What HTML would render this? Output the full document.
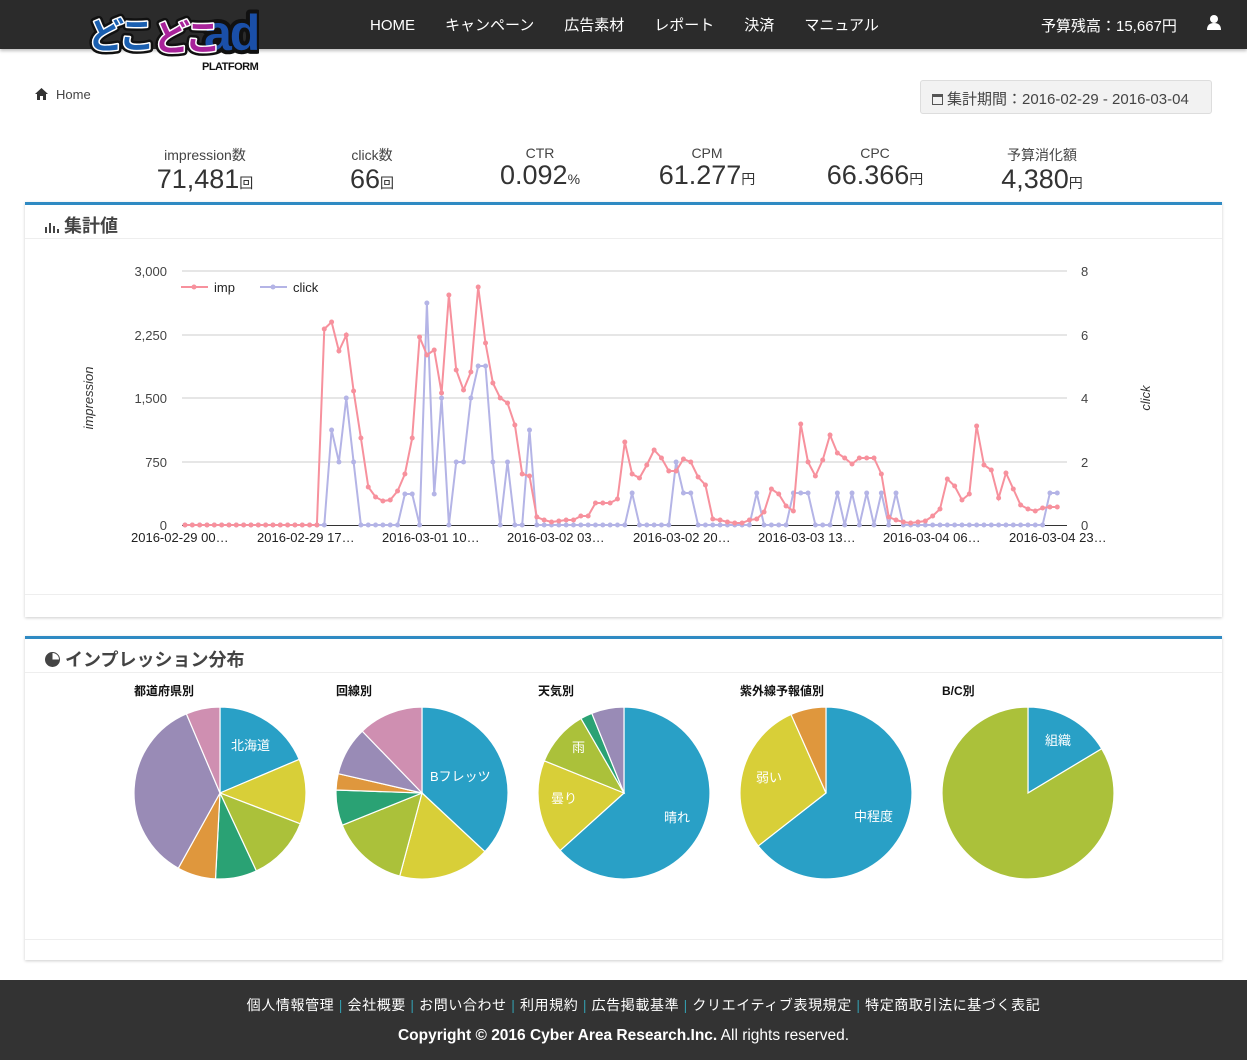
<!DOCTYPE html>
<html><head><meta charset="utf-8">
<style>
*{box-sizing:border-box;margin:0;padding:0}
body{width:1247px;height:1060px;background:#fff;font-family:"Liberation Sans","Noto Sans CJK JP",sans-serif;color:#333;position:relative;overflow:hidden}
.hdr{position:absolute;left:0;top:0;width:1247px;height:49px;background:#2b2b2b;box-shadow:0 2px 3px rgba(0,0,0,.25)}
.nav{position:absolute;top:14px;left:370px;color:#fff;font-size:15px;white-space:nowrap}
.nav span{margin-right:30px}
.bud{position:absolute;top:15px;left:1041px;color:#fff;font-size:15px}
.abs{position:absolute}
.stat{position:absolute;top:145px;width:160px;text-align:center}
.stat .l{font-size:14px;color:#444}
.stat .v{font-size:27px;color:#333;line-height:28px}
.stat .v small{font-size:14px}
.panel{position:absolute;left:25px;width:1197px;border-top:3px solid #2f8ac3;background:#fff;box-shadow:0 1px 3px rgba(0,0,0,.2)}
.ph{height:34px;border-bottom:1px solid #eee;font-size:18px;font-weight:bold;color:#444;padding:7px 0 0 20px}
.foot{position:absolute;left:0;top:980px;width:1247px;height:80px;background:#333;color:#fff;text-align:center}
</style></head><body>
<div class="hdr">
 <svg class="abs" style="left:84px;top:0" width="175" height="75" font-family="Noto Sans CJK JP, sans-serif" font-weight="bold">
  <g stroke="#111" stroke-width="8" stroke-linejoin="round" paint-order="stroke">
   <text x="4" y="48" font-size="36" fill="#1a5fb0" letter-spacing="-4" stroke="#111">どこ</text>
   <text x="70" y="50" font-size="36" fill="#a8239a" letter-spacing="-4">どこ</text>
   <text x="120" y="50" font-size="50" fill="#1a4fa8" font-family="Liberation Sans, sans-serif" letter-spacing="-2">ad</text>
  </g>
  <g stroke="#fff" stroke-width="3" paint-order="stroke" stroke-linejoin="round">
   <text x="4" y="48" font-size="36" fill="#1a5fb0" letter-spacing="-4">どこ</text>
   <text x="70" y="50" font-size="36" fill="#a8239a" letter-spacing="-4">どこ</text>
  </g>
  <text x="118" y="70" font-size="11" fill="#111" font-family="Liberation Sans, sans-serif" letter-spacing="-.5">PLATFORM</text>
 </svg>
 <div class="nav"><span>HOME</span><span>キャンペーン</span><span>広告素材</span><span>レポート</span><span>決済</span><span>マニュアル</span></div>
 <div class="bud">予算残高：15,667円</div>
 <svg class="abs" style="left:1206px;top:14px" width="16" height="16" viewBox="0 0 16 16"><circle cx="8" cy="5" r="4" fill="#fff"/><path d="M1 16 Q1 9 8 9 Q15 9 15 16Z" fill="#fff"/></svg>
</div>
<svg class="abs" style="left:35px;top:88px" width="13" height="12" viewBox="0 0 13 12"><path d="M6.5 0 L13 6 L11 6 L11 12 L8 12 L8 8 L5 8 L5 12 L2 12 L2 6 L0 6Z" fill="#333"/></svg>
<div class="abs" style="left:56px;top:87px;font-size:13px;color:#444">Home</div>
<div class="abs" style="left:920px;top:80px;width:292px;height:34px;background:#f2f2f2;border:1px solid #ddd;border-radius:3px;font-size:15px;color:#444;padding:7px 0 0 11px;white-space:nowrap"><span style="display:inline-block;width:11px;height:11px;border:1.5px solid #555;border-top-width:3px;margin-right:4px;vertical-align:-1px"></span>集計期間：2016-02-29 - 2016-03-04</div>

<div class="stat" style="left:125px"><div class="l">impression数</div><div class="v">71,481<small>回</small></div></div>
<div class="stat" style="left:292px"><div class="l">click数</div><div class="v">66<small>回</small></div></div>
<div class="stat" style="left:460px"><div class="l">CTR</div><div class="v">0.092<small>%</small></div></div>
<div class="stat" style="left:627px"><div class="l">CPM</div><div class="v">61.277<small>円</small></div></div>
<div class="stat" style="left:795px"><div class="l">CPC</div><div class="v">66.366<small>円</small></div></div>
<div class="stat" style="left:962px"><div class="l">予算消化額</div><div class="v">4,380<small>円</small></div></div>

<div class="panel" style="top:202px;height:415px">
 <div class="ph"><svg width="14" height="12" style="vertical-align:-1px"><rect x="0" y="6" width="2" height="6" fill="#444"/><rect x="4" y="2" width="2" height="10" fill="#444"/><rect x="8" y="5" width="2" height="7" fill="#444"/><rect x="12" y="8" width="2" height="4" fill="#444"/></svg> 集計値</div>
 <div style="position:absolute;left:0;bottom:22px;width:100%;border-top:1px solid #eee"></div>
</div>
<svg class="abs" style="left:0;top:255px" width="1247" height="300" font-family="Liberation Sans, sans-serif">
 <g stroke="#ccc" stroke-width="1">
  <line x1="182" y1="16" x2="1067" y2="16"/><line x1="182" y1="80" x2="1067" y2="80"/><line x1="182" y1="143" x2="1067" y2="143"/><line x1="182" y1="207" x2="1067" y2="207"/>
 </g>
 <line x1="182" y1="270.5" x2="1067" y2="270.5" stroke="#333"/>
 <g font-size="13" fill="#444" text-anchor="end">
  <text x="167" y="21">3,000</text><text x="167" y="85">2,250</text><text x="167" y="148">1,500</text><text x="167" y="212">750</text><text x="167" y="275">0</text>
 </g>
 <g font-size="13" fill="#444">
  <text x="1081" y="21">8</text><text x="1081" y="85">6</text><text x="1081" y="148">4</text><text x="1081" y="212">2</text><text x="1081" y="275">0</text>
 </g>
 <g font-size="13" fill="#222">
  <text x="131" y="287">2016-02-29 00…</text><text x="257" y="287">2016-02-29 17…</text><text x="382" y="287">2016-03-01 10…</text><text x="507" y="287">2016-03-02 03…</text><text x="633" y="287">2016-03-02 20…</text><text x="758" y="287">2016-03-03 13…</text><text x="883" y="287">2016-03-04 06…</text><text x="1009" y="287">2016-03-04 23…</text>
 </g>
 <text transform="translate(93,143) rotate(-90)" font-size="13" font-style="italic" fill="#333" text-anchor="middle">impression</text>
 <text transform="translate(1150,143) rotate(-90)" font-size="13" font-style="italic" fill="#333" text-anchor="middle">click</text>
 <line x1="181" y1="32" x2="208" y2="32" stroke="#f7919d" stroke-width="2"/><circle cx="194" cy="32" r="2.5" fill="#f7919d"/>
 <text x="214" y="37" font-size="13" fill="#222">imp</text>
 <line x1="260" y1="32" x2="287" y2="32" stroke="#b4b4e6" stroke-width="2"/><circle cx="273" cy="32" r="2.5" fill="#b4b4e6"/>
 <text x="293" y="37" font-size="13" fill="#222">click</text>
 <g id="lines"></g>
</svg>

<div class="panel" style="top:636px;height:324px">
 <div class="ph"><span style="display:inline-block;width:15px;height:15px;border-radius:50%;background:conic-gradient(#fff 0 25%,#444 25%);border:1px solid #444;vertical-align:-1px"></span> インプレッション分布</div>
 <div style="position:absolute;left:0;bottom:20px;width:100%;border-top:1px solid #eee"></div>
</div>
<svg class="abs" style="left:0;top:670px" width="1247" height="230" font-family="Liberation Sans, Noto Sans CJK JP, sans-serif">
 <g font-size="12" font-weight="bold" fill="#111">
  <text x="134" y="25">都道府県別</text><text x="336" y="25">回線別</text><text x="538" y="25">天気別</text><text x="740" y="25">紫外線予報値別</text><text x="942" y="25">B/C別</text>
 </g>
 <g id="pies" stroke="#fff" stroke-width="1.2"></g>
 <g font-size="13" fill="#fff">
  <text x="231" y="80">北海道</text><text x="430" y="111">Bフレッツ</text><text x="572" y="82">雨</text><text x="551" y="133">曇り</text><text x="664" y="152">晴れ</text><text x="756" y="112">弱い</text><text x="854" y="151">中程度</text><text x="1045" y="75">組織</text>
 </g>
</svg>

<div class="foot">
 <div style="padding-top:15px;padding-left:40px;font-size:14px;color:#fff;letter-spacing:.6px">個人情報管理<span style="color:#39a"> | </span>会社概要<span style="color:#39a"> | </span>お問い合わせ<span style="color:#39a"> | </span>利用規約<span style="color:#39a"> | </span>広告掲載基準<span style="color:#39a"> | </span>クリエイティブ表現規定<span style="color:#39a"> | </span>特定商取引法に基づく表記</div>
 <div style="padding-top:12px;font-size:15.5px"><b>Copyright © 2016 Cyber Area Research.Inc.</b> All rights reserved.</div>
</div>
<script>
var NS="http://www.w3.org/2000/svg";
var imp=[];for(var i=0;i<19;i++)imp.push(525);
imp=imp.concat([329,322,351,335,391,438,487,497,501,500,491,474,438,337,355,350,393,295,370,390,372,287,343,383,398,403,425,474,476,517,520,522,521,520,520,516,516,503,503,503,499,442,474,478,465,450,458,471,471,459,462,477,485,519,520,522,523,523,520,519,512,489,494,506,511,424,462,476,460,435,453,458,464,458,458,458,474,517,520,522,523,522,521,516,509,479,486,500,494,426,465,470,498,473,489,505,509,511,508,507,507]);
var clk=[];for(i=0;i<120;i++)clk.push(525);
var cv={20:430,21:462,22:398,23:462,30:494,31:494,33:303,34:494,35:398,37:462,38:462,39:398,40:366,41:366,42:462,44:462,47:430,61:493,67:462,68:493,69:493,78:493,83:493,84:493,85:493,89:493,91:493,93:493,95:493,97:493,118:493,119:493};
for(var k in cv)clk[+k]=cv[k];
var g=document.getElementById("lines");
function draw(arr,col){var n=arr.length,pts=[];for(var i=0;i<n;i++){pts.push((185+i*7.33).toFixed(1)+","+(arr[i]-255));}
var p=document.createElementNS(NS,"polyline");p.setAttribute("points",pts.join(" "));p.setAttribute("fill","none");p.setAttribute("stroke",col);p.setAttribute("stroke-width","2");g.appendChild(p);
for(i=0;i<n;i++){var c=document.createElementNS(NS,"circle");c.setAttribute("cx",185+i*7.33);c.setAttribute("cy",arr[i]-255);c.setAttribute("r","2.5");c.setAttribute("fill",col);g.appendChild(c);}}
draw(clk,"#b4b4e6");draw(imp,"#f7919d");
var pg=document.getElementById("pies");
function pie(cx,cy,r,sl){var a=0;sl.forEach(function(s){var a2=a+s[0];var x1=cx+r*Math.sin(a*Math.PI/180),y1=cy-r*Math.cos(a*Math.PI/180),x2=cx+r*Math.sin(a2*Math.PI/180),y2=cy-r*Math.cos(a2*Math.PI/180);
var p=document.createElementNS(NS,"path");p.setAttribute("d","M"+cx+","+cy+"L"+x1+","+y1+"A"+r+","+r+" 0 "+(s[0]>180?1:0)+" 1 "+x2+","+y2+"Z");p.setAttribute("fill",s[1]);pg.appendChild(p);a=a2;});}
var B="#29a0c6",Y="#d8cf38",YG="#abc13a",G="#2aa274",O="#df973d",P="#998bb6",PK="#cf8fb1";
pie(220,123,86,[[67,B],[44,Y],[44,YG],[28,G],[26,O],[128,P],[23,PK]]);
pie(422,123,86,[[133,B],[62,Y],[53,YG],[24,G],[11,O],[33,P],[44,PK]]);
pie(624,123,86,[[228,B],[64,Y],[38,YG],[8,G],[22,P]]);
pie(826,123,86,[[232,B],[104,Y],[24,O]]);
pie(1028,123,86,[[59,B],[301,YG]]);
</script>
</body></html>
